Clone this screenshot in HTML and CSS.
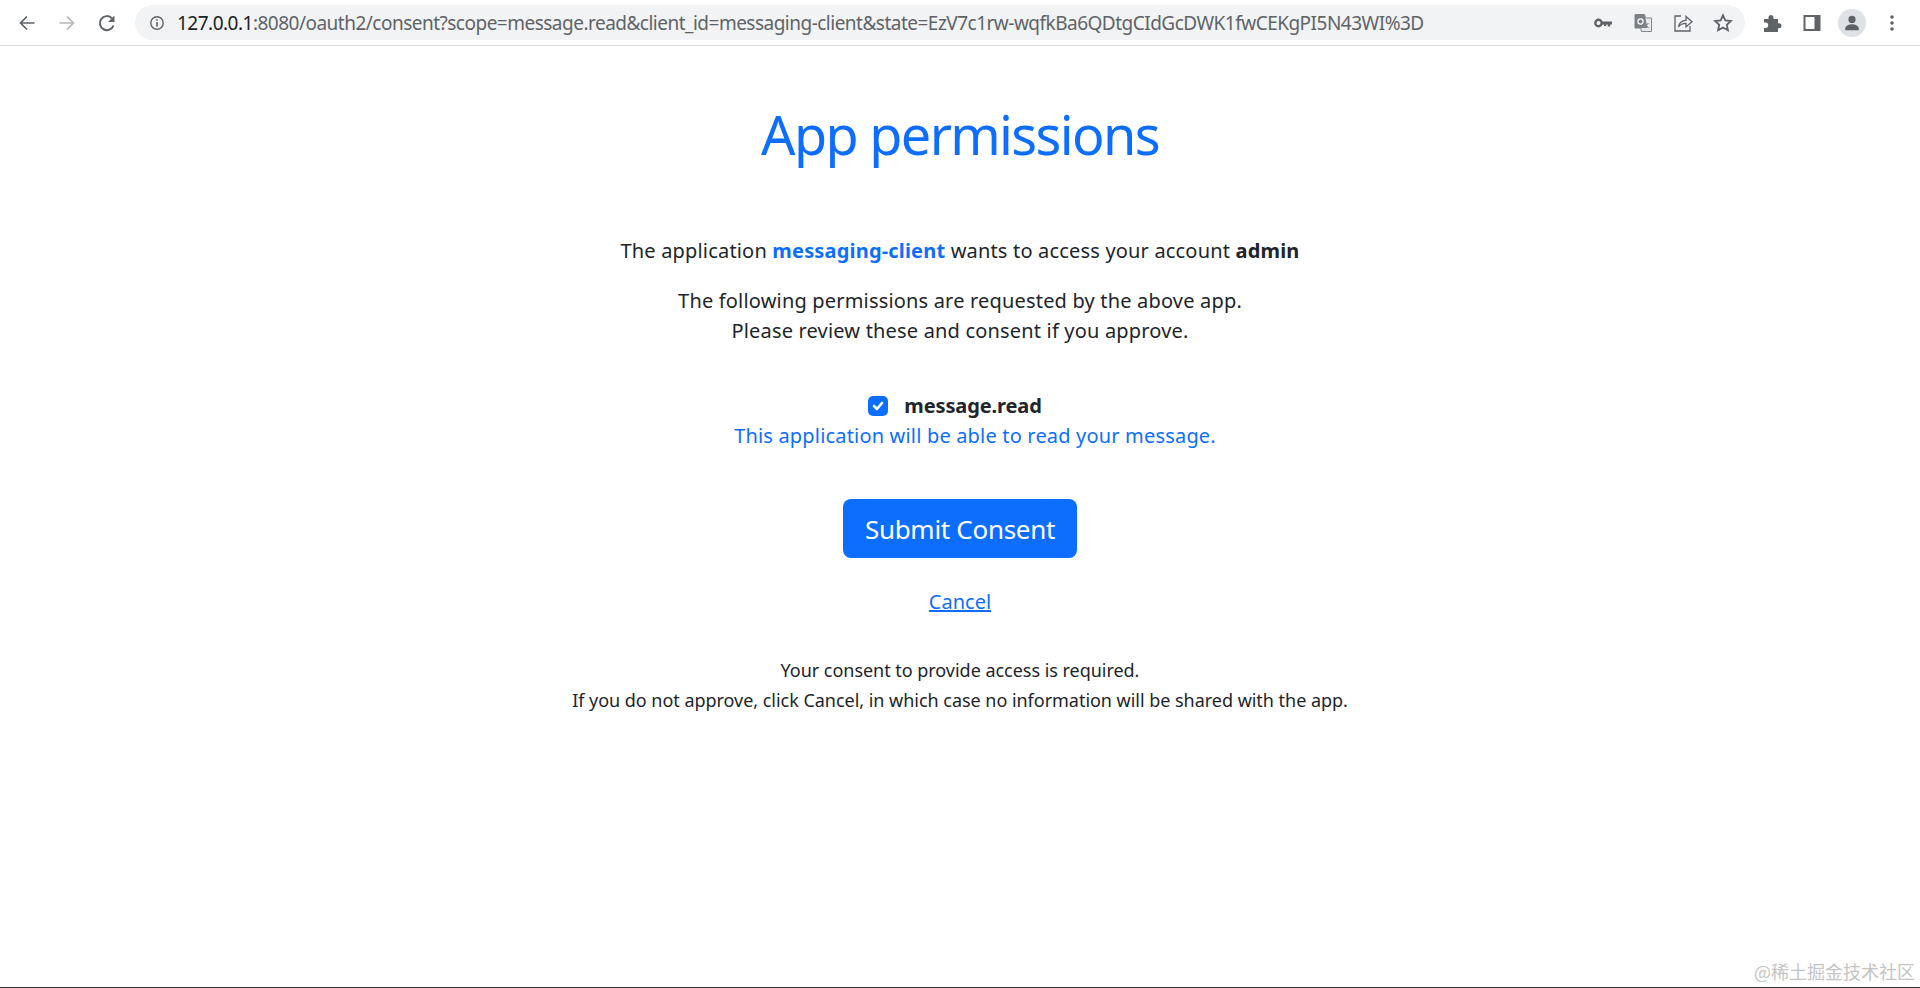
FILE: index.html
```html
<!DOCTYPE html>
<html lang="en">
<head>
<meta charset="utf-8">
<title>Consent required</title>
<link rel="stylesheet" href="styles.css">
</head>
<body>
<header class="toolbar">
  <div class="nav">
    <svg class="ic back" viewBox="0 0 20 20"><path d="M17.500 10H3.500M10 3.500 3.500 10l6.500 6.500" fill="none" stroke="#5f6368" stroke-width="1.700"/></svg>
    <svg class="ic fwd" viewBox="0 0 20 20"><path d="M2.500 10h14M10 3.500l6.500 6.500-6.500 6.500" fill="none" stroke="#b4b7bb" stroke-width="1.700"/></svg>
    <svg class="ic reload" viewBox="0 0 20 20"><path d="M16.500 12.500A7 7 0 1 1 15 5.300" fill="none" stroke="#5f6368" stroke-width="2"/><path d="M17.500 2.500v6.500H11z" fill="#5f6368"/></svg>
  </div>
  <div class="omnibox">
    <svg class="info" viewBox="0 0 16 16"><circle cx="8" cy="8" r="6.200" fill="none" stroke="#5f6368" stroke-width="1.400"/><path d="M7.200 7h1.600v4.600H7.200zM7.200 4.200h1.600v1.600H7.200z" fill="#5f6368"/></svg>
    <div class="url"><span class="host">127.0.0.1</span>:8080/oauth2/consent?scope=message.read&amp;client_id=messaging-client&amp;state=EzV7c1rw-wqfkBa6QDtgCIdGcDWK1fwCEKgPI5N43WI%3D</div>
    <div class="omni-actions">
      <svg class="ic" viewBox="0 0 20 20"><circle cx="5.500" cy="10" r="3.200" fill="none" stroke="#5f6368" stroke-width="2.400"/><path d="M8.500 8.600h10.500v2.800h-1.800v2.200h-2.400v-2.200h-1.500v1.600h-2.400v-1.600H8.500z" fill="#5f6368"/></svg>
      <svg class="ic" viewBox="0 0 20 20"><path d="M2 1.500h9.500l1 3.500H18.500v13.500H8.500l-.8-3.500H2z" fill="#e8eaed" stroke="#80868b" stroke-width="1"/><path d="M2 1.500h9.500l3 13.500H2z" fill="#7b8085"/><circle cx="7.500" cy="8.500" r="2.600" fill="none" stroke="#fff" stroke-width="1.200"/><path d="m11 10 4.500 5M15.500 10 11 15" stroke="#80868b" stroke-width="1.100"/></svg>
      <svg class="ic" viewBox="0 0 20 20"><path d="M8 3H2v15h15v-5" fill="none" stroke="#5f6368" stroke-width="1.300"/><path d="M5.500 14c.6-4.500 3.700-6.500 7.500-6.700V3.500l6 5.200-6 5.200v-3.500c-3 0-5.800 1-7.500 3.600z" fill="none" stroke="#5f6368" stroke-width="1.300"/></svg>
      <svg class="ic" viewBox="0 0 20 20"><path d="m10 2.300 2.300 5.100 5.600.6-4.100 3.800 1.100 5.500-4.900-2.800-4.900 2.800 1.100-5.500-4.100-3.800 5.600-.6z" fill="none" stroke="#5f6368" stroke-width="1.800"/></svg>
    </div>
  </div>
  <div class="tools">
    <svg class="ic" viewBox="0 0 20 20"><path d="M2 6h4.500V4.500a2.500 2.500 0 0 1 5 0V6H16v4.300h1a2.500 2.500 0 0 1 0 5h-1V19H2v-4h1.500a2.700 2.700 0 0 0 0-5.400H2z" fill="#5f6368"/></svg>
    <svg class="ic" viewBox="0 0 20 20"><path d="M1.500 2h17v16h-17z" fill="#5f6368"/><path d="M3.500 4h9v12h-9z" fill="#fff"/></svg>
    <div class="avatar"><svg viewBox="0 0 20 20"><circle cx="10" cy="6" r="4" fill="#5f6368"/><path d="M2.500 18v-2c0-3.200 5-4.500 7.500-4.500s7.500 1.300 7.500 4.500v2z" fill="#5f6368"/></svg></div>
    <svg class="ic" viewBox="0 0 20 20"><circle cx="10" cy="4" r="1.800" fill="#5f6368"/><circle cx="10" cy="10" r="1.800" fill="#5f6368"/><circle cx="10" cy="16" r="1.800" fill="#5f6368"/></svg>
  </div>
</header>
<main class="consent">
  <h1 class="title">App permissions</h1>
  <p class="lead">The application <span class="client">messaging-client</span> wants to access your account <b class="account">admin</b></p>
  <p class="review">The following permissions are requested by the above app.<br>Please review these and consent if you approve.</p>
  <div class="scope">
    <label class="scope-label"><span class="check"><svg viewBox="0 0 20 20"><path d="m6 10 3 3 5-6" fill="none" stroke="#fff" stroke-width="2.600" stroke-linecap="round" stroke-linejoin="round"/></svg></span><span>message.read</span></label>
    <p class="scope-desc">This application will be able to read your message.</p>
  </div>
  <button class="submit" type="button">Submit Consent</button>
  <a class="cancel" href="#">Cancel</a>
  <p class="note">Your consent to provide access is required.<br>If you do not approve, click Cancel, in which case no information will be shared with the app.</p>
</main>
<footer class="watermark">@稀土掘金技术社区</footer>
</body>
</html>
```
FILE: styles.css
```css
* { box-sizing: border-box; }
html, body { margin: 0; height: 100%; }
body {
  height: 988px;
  overflow: hidden;
  display: flex;
  flex-direction: column;
  background: #fff;
  color: #212529;
  font-family: "Noto Sans", "Open Sans", sans-serif;
  border-bottom: 1px solid #333;
}
.toolbar {
  height: 46px;
  flex: none;
  display: flex;
  align-items: center;
  border-bottom: 1px solid #dadce0;
}
.ic { width: 20px; height: 20px; flex: none; display: block; }
.nav { width: 135px; flex: none; display: flex; padding-left: 17px; gap: 20px; }
.omnibox {
  width: 1610px;
  height: 35px;
  flex: none;
  display: flex;
  align-items: center;
  background: #f1f3f4;
  border-radius: 18px;
  padding: 0 12px 0 14px;
}
.info { width: 16px; height: 16px; flex: none; }
.url {
  flex: 1;
  margin-left: 12px;
  font-size: 19px;
  letter-spacing: -0.51px;
  color: #5f6368;
  white-space: nowrap;
  overflow: hidden;
}
.host { color: #202124; }
.omni-actions { display: flex; gap: 20px; }
.tools { flex: 1; display: flex; align-items: center; padding-left: 17px; gap: 20px; }
.avatar {
  width: 28px; height: 28px; margin: 0 -4px; border-radius: 50%;
  background: #dee1e6; padding: 5px; flex: none;
}
.avatar svg { display: block; }

.consent {
  flex: 1;
  display: flex;
  flex-direction: column;
  align-items: center;
  text-align: center;
}
.title {
  margin: 55px 0 0;
  font-size: 54px;
  line-height: 67px;
  font-weight: 400;
  color: #0d6efd;
  letter-spacing: -1.67px;
}
.lead, .review, .scope-desc { font-size: 20px; line-height: 30px; letter-spacing: 0.18px; }
.lead { margin: 68px 0 0; color: #212529; }
.client { color: #0d6efd; font-weight: 700; }
.account { font-weight: 700; }
.review { margin: 20px 0 0; }
.scope { margin-top: 44px; }
.scope-label {
  display: flex;
  justify-content: center;
  align-items: center;
  gap: 16px;
  height: 31px;
  padding-right: 10px;
  font-size: 20px;
  font-weight: 700;
  letter-spacing: -0.12px;
}
.check {
  width: 20px; height: 20px; border-radius: 5px; background: #0d6efd; flex: none;
}
.check svg { display: block; }
.scope-desc { margin: 0; padding-left: 30px; color: #0d6efd; }
.submit {
  margin-top: 48px;
  width: 234px;
  height: 59px;
  border: 0;
  border-radius: 8px;
  background: #0d6efd;
  color: #fff;
  font-family: inherit;
  font-size: 26px;
  letter-spacing: -0.3px;
}
.cancel {
  margin-top: 29px;
  font-size: 20px;
  line-height: 30px;
  color: #0d6efd;
}
.note { margin: 38px 0 0; font-size: 18px; line-height: 30px; letter-spacing: -0.03px; }
.watermark {
  position: absolute;
  right: 5px;
  bottom: 5px;
  font-family: "Noto Sans CJK SC", sans-serif;
  font-size: 18px;
  line-height: 24px;
  color: #c4c4c4;
}
```
